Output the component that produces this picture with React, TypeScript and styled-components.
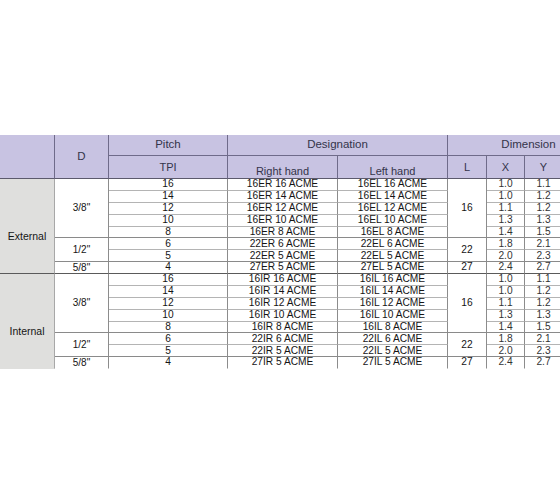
import React from "react";
import styled, { createGlobalStyle } from "styled-components";

const Global = createGlobalStyle`
  html, body { margin: 0; padding: 0; background: #ffffff; }
  body { font-family: "Liberation Sans", Arial, sans-serif; overflow: hidden; }
`;

const Page = styled.div`
  width: 560px;
  height: 504px;
  overflow: hidden;
  padding-top: 135px;
  box-sizing: border-box;
  background: #fff;
`;

const Grid = styled.div`
  display: grid;
  width: 610px;
  grid-template-columns: 55px 54px 119px 110px 110px 39px 38px 38px 47px;
  grid-template-rows: 21px 23px repeat(16, 11.875px);
`;

type CellProps = {
  $rows?: number;
  $cols?: number;
  $bg?: string;
  $rb?: string;
  $bb?: string;
  $size?: number;
  $align?: "center" | "end";
  $pad?: number;
  $top?: number;
  $color?: string;
};

const Cell = styled.div<CellProps>`
  box-sizing: border-box;
  grid-row: span ${(p) => p.$rows ?? 1};
  grid-column: span ${(p) => p.$cols ?? 1};
  background: ${(p) => p.$bg ?? "#ffffff"};
  border-right: 1px solid ${(p) => p.$rb ?? "transparent"};
  border-bottom: 1px solid ${(p) => p.$bb ?? "transparent"};
  display: flex;
  justify-content: center;
  align-items: ${(p) => (p.$align === "end" ? "flex-end" : "center")};
  padding-bottom: ${(p) => p.$pad ?? 0}px;
  padding-top: ${(p) => p.$top ?? 0}px;
  font-size: ${(p) => p.$size ?? 10.2}px;
  line-height: 1;
  color: ${(p) => p.$color ?? "#151515"};
  white-space: nowrap;
  overflow: hidden;
`;

const HEAD_BG = "#c8c3e2";
const HEAD_LINE = "#6f6b8a";
const HEAD_BOTTOM = "#5c5a6c";
const HEAD_TEXT = "#34344a";
const V_LINE = "#8c8c8c";
const ROW_LINE = "#b4b4b4";
const GROUP_LINE = "#8a8a8a";
const SECTION_LINE = "#5a5a5a";
const TYPE_BG = "#dfdfdd";

type Group = {
  d: string;
  l: string;
  rows: { tpi: string; x: string; y: string }[];
};

const groups: Group[] = [
  {
    d: '3/8"',
    l: "16",
    rows: [
      { tpi: "16", x: "1.0", y: "1.1" },
      { tpi: "14", x: "1.0", y: "1.2" },
      { tpi: "12", x: "1.1", y: "1.2" },
      { tpi: "10", x: "1.3", y: "1.3" },
      { tpi: "8", x: "1.4", y: "1.5" },
    ],
  },
  {
    d: '1/2"',
    l: "22",
    rows: [
      { tpi: "6", x: "1.8", y: "2.1" },
      { tpi: "5", x: "2.0", y: "2.3" },
    ],
  },
  {
    d: '5/8"',
    l: "27",
    rows: [{ tpi: "4", x: "2.4", y: "2.7" }],
  },
];

const sections = [
  { name: "External", r: "ER", lh: "EL" },
  { name: "Internal", r: "IR", lh: "IL" },
];

function Header() {
  return (
    <>
      <Cell $rows={2} $bg={HEAD_BG} $rb={HEAD_LINE} $bb={HEAD_BOTTOM} />
      <Cell $rows={2} $bg={HEAD_BG} $rb={HEAD_LINE} $bb={HEAD_BOTTOM} $size={11.5} $color={HEAD_TEXT}>
        D
      </Cell>
      <Cell $bg={HEAD_BG} $rb={HEAD_LINE} $bb={HEAD_LINE} $size={11.5} $color={HEAD_TEXT}>
        Pitch
      </Cell>
      <Cell $cols={2} $bg={HEAD_BG} $rb={HEAD_LINE} $bb={HEAD_LINE} $size={11.5} $color={HEAD_TEXT}>
        Designation
      </Cell>
      <Cell $cols={4} $bg={HEAD_BG} $bb={HEAD_LINE} $size={11.5} $color={HEAD_TEXT}>
        Dimension
      </Cell>
      <Cell $bg={HEAD_BG} $rb={HEAD_LINE} $bb={HEAD_BOTTOM} $size={11} $color={HEAD_TEXT}>
        TPI
      </Cell>
      <Cell $bg={HEAD_BG} $rb={HEAD_LINE} $bb={HEAD_BOTTOM} $size={11} $color={HEAD_TEXT} $align="end" $pad={1}>
        Right hand
      </Cell>
      <Cell $bg={HEAD_BG} $rb={HEAD_LINE} $bb={HEAD_BOTTOM} $size={11} $color={HEAD_TEXT} $align="end" $pad={1}>
        Left hand
      </Cell>
      <Cell $bg={HEAD_BG} $rb={HEAD_LINE} $bb={HEAD_BOTTOM} $size={11} $color={HEAD_TEXT}>
        L
      </Cell>
      <Cell $bg={HEAD_BG} $rb={HEAD_LINE} $bb={HEAD_BOTTOM} $size={11} $color={HEAD_TEXT}>
        X
      </Cell>
      <Cell $bg={HEAD_BG} $rb={HEAD_LINE} $bb={HEAD_BOTTOM} $size={11} $color={HEAD_TEXT}>
        Y
      </Cell>
      <Cell $bg={HEAD_BG} $bb={HEAD_BOTTOM} />
    </>
  );
}

function Section({ s, last }: { s: (typeof sections)[number]; last: boolean }) {
  const cells: React.ReactNode[] = [];
  const total = groups.reduce((n, g) => n + g.rows.length, 0);
  const sectionBottom = last ? "transparent" : SECTION_LINE;
  groups.forEach((g, gi) => {
    const lastGroup = gi === groups.length - 1;
    const groupBottom = lastGroup ? sectionBottom : GROUP_LINE;
    g.rows.forEach((r, ri) => {
      const lastRow = ri === g.rows.length - 1;
      const bb = lastRow ? groupBottom : ROW_LINE;
      const key = `${s.name}-${gi}-${ri}`;
      if (gi === 0 && ri === 0) {
        cells.push(
          <Cell
            key={key + "t"}
            $rows={total}
            $bg={TYPE_BG}
            $rb="#a8a8a8"
            $bb={sectionBottom}
            $size={10.5}
            $top={21}
          >
            {s.name}
          </Cell>
        );
      }
      if (ri === 0) {
        cells.push(
          <Cell key={key + "d"} $rows={g.rows.length} $rb={V_LINE} $bb={groupBottom} $size={10}>
            {g.d}
          </Cell>
        );
      }
      cells.push(
        <Cell key={key + "p"} $rb={V_LINE} $bb={bb}>
          {r.tpi}
        </Cell>
      );
      const num = g.l;
      const pitch = r.tpi === "4" ? "5" : r.tpi;
      cells.push(
        <Cell key={key + "r"} $rb={V_LINE} $bb={bb}>
          {`${num}${s.r} ${pitch} ACME`}
        </Cell>
      );
      cells.push(
        <Cell key={key + "l"} $rb={V_LINE} $bb={bb}>
          {`${num}${s.lh} ${pitch} ACME`}
        </Cell>
      );
      if (ri === 0) {
        cells.push(
          <Cell key={key + "L"} $rows={g.rows.length} $rb={V_LINE} $bb={groupBottom}>
            {g.l}
          </Cell>
        );
      }
      cells.push(
        <Cell key={key + "x"} $rb={V_LINE} $bb={bb} $color="#333">
          {r.x}
        </Cell>
      );
      cells.push(
        <Cell key={key + "y"} $rb={V_LINE} $bb={bb} $color="#333">
          {r.y}
        </Cell>
      );
      cells.push(<Cell key={key + "z"} $bb={bb} />);
    });
  });
  return <>{cells}</>;
}

export default function App() {
  return (
    <>
      <Global />
      <Page>
        <Grid>
          <Header />
          {sections.map((s, i) => (
            <Section key={s.name} s={s} last={i === sections.length - 1} />
          ))}
        </Grid>
      </Page>
    </>
  );
}
